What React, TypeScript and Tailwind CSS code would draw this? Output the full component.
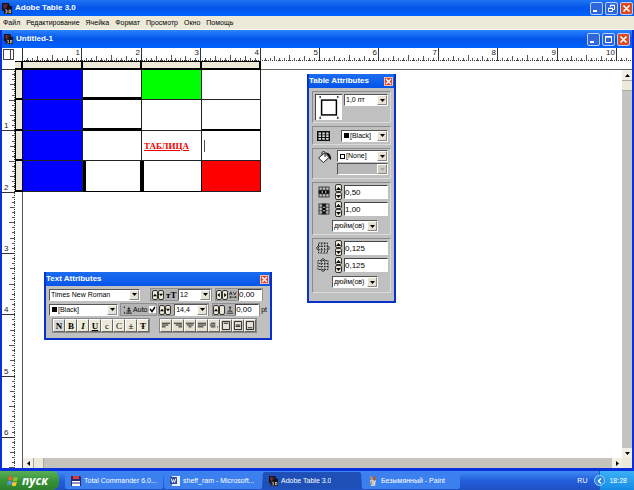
import { useState, type ReactNode } from "react";

const INCH_X = 59.4;
const INCH_Y = 61.3;

function Arrow({ dir }: { dir: "up" | "down" | "left" | "right" }) {
    const shapes = {
        up: "M0 4L2.5 1L5 4Z",
        down: "M0 1L2.5 4L5 1Z",
        left: "M4 0L1 2.5L4 5Z",
        right: "M1 0L4 2.5L1 5Z",
    };
    return (
        <svg viewBox="0 0 5 5" className="h-[5px] w-[5px] shrink-0">
            <path d={shapes[dir]} fill="#000" />
        </svg>
    );
}

function AppIcon({ small = false }: { small?: boolean }) {
    return (
        <svg viewBox="0 0 10 11" className={small ? "h-[10px] w-[9px] shrink-0" : "h-[11px] w-[10px] shrink-0"}>
            <path d="M0 0H7L8 3H10V11H2V8H0Z" fill="#16101c" />
            <path d="M1 2H6M1 4H5M3 1V6" stroke="#8c3a44" strokeWidth="0.8" />
            <path d="M3 7H5V8.5H4M5 8.5V10H3" stroke="#e8e0d0" strokeWidth="0.7" fill="none" />
            <rect x="7" y="7.2" width="1.8" height="2.6" stroke="#e8e0d0" strokeWidth="0.7" fill="none" />
        </svg>
    );
}

function WindowButtons({ restore = false }: { restore?: boolean }) {
    const base = "flex h-[13px] w-[13px] items-center justify-center rounded-[2px] border border-[#b9cdf5]";
    return (
        <div className="flex gap-[2px]">
            <button aria-label="Свернуть" className={`${base} bg-[#2f66dc]`}>
                <svg viewBox="0 0 11 11" className="h-[11px] w-[11px]"><path d="M2 8H6" stroke="#fff" strokeWidth="2" /></svg>
            </button>
            <button aria-label={restore ? "Восстановить" : "Развернуть"} className={`${base} bg-[#2f66dc]`}>
                {restore ? (
                    <svg viewBox="0 0 11 11" className="h-[11px] w-[11px]" fill="none" stroke="#fff">
                        <path d="M4.5 4V2.5H8.5V6.5H7M4 2.2H9M2.5 5.5H6.5V8.5H2.5ZM2 5.2H7" />
                    </svg>
                ) : (
                    <svg viewBox="0 0 11 11" className="h-[11px] w-[11px]" fill="none" stroke="#fff">
                        <path d="M2.5 2.5H8.5V8.5H2.5ZM2 3.2H9" />
                    </svg>
                )}
            </button>
            <button aria-label="Закрыть" className={`${base} bg-[#dc4a22]`}>
                <svg viewBox="0 0 11 11" className="h-[11px] w-[11px]"><path d="M2.5 2.5L8.5 8.5M8.5 2.5L2.5 8.5" stroke="#fff" strokeWidth="1.6" /></svg>
            </button>
        </div>
    );
}

function MenuBar() {
    const items = ["Файл", "Редактирование", "Ячейка", "Формат", "Просмотр", "Окно", "Помощь"];
    return (
        <nav className="flex h-[14px] shrink-0 items-center gap-[6px] border-b border-[#f8f7f0] bg-[#ece9d8] px-[3px] text-[7px] leading-[12px]">
            {items.map((item) => (
                <button key={item}>{item}</button>
            ))}
        </nav>
    );
}

function tickSize(i: number) {
    if (i % 6 === 0) return 5;
    if (i % 3 === 0) return 4;
    return 2;
}

function HorizontalRuler() {
    const ticks = Array.from({ length: 123 }, (_, i) => i);
    return (
        <svg className="h-[13px] min-w-0 flex-1 bg-white" shapeRendering="crispEdges">
            <path d="M0 12.5H2000" stroke="#333" strokeDasharray="1 1" />
            {ticks.map((i) => {
                const x = Math.round((i * INCH_X) / 12) + 0.5;
                return <path key={i} d={`M${x} ${i % 12 === 0 ? 0 : 12 - tickSize(i)}V13`} stroke={i % 12 === 0 ? "#333" : "#555"} />;
            })}
            {Array.from({ length: 10 }, (_, n) => n + 1).map((n) => (
                <text key={n} x={Math.round(n * INCH_X) - 1} y="7" textAnchor="end" fontSize="8" fill="#222">{n}</text>
            ))}
        </svg>
    );
}

function VerticalRuler() {
    const ticks = Array.from({ length: 79 }, (_, i) => i);
    return (
        <svg className="w-[13px] shrink-0 self-stretch bg-white" shapeRendering="crispEdges">
            <path d="M12.5 8V1200" stroke="#333" strokeDasharray="1 1" />
            {ticks.map((i) => {
                const y = Math.round((i * INCH_Y) / 12) + 8.5;
                return <path key={i} d={`M${i % 12 === 0 ? 0 : 12 - tickSize(i)} ${y}H13`} stroke={i % 12 === 0 ? "#333" : "#555"} />;
            })}
            {[1, 2, 3, 4, 5, 6].map((n) => (
                <text key={n} x="2" y={Math.round(n * INCH_Y) + 6} fontSize="8" fill="#222">{n}</text>
            ))}
        </svg>
    );
}

function DocumentTable() {
    const cell = "h-[31px] border-r border-b border-[#222] p-0";
    const head = "border-r-2 border-b-2 border-t border-black bg-[#ece9d8] p-0";
    const side = "border-b-2 border-r border-l border-black bg-[#ece9d8] p-0";
    return (
        <table className="w-[246px] shrink-0 table-fixed border-separate border-spacing-0">
            <colgroup>
                <col className="w-[8px]" />
                <col className="w-[60px]" />
                <col className="w-[59px]" />
                <col className="w-[60px]" />
                <col className="w-[59px]" />
            </colgroup>
            <thead>
                <tr className="h-[9px]">
                    <th className={head} />
                    <th className={head} />
                    <th className={head} />
                    <th className={head} />
                    <th className={head} />
                </tr>
            </thead>
            <tbody>
                <tr className="h-[30px]">
                    <th className={side} />
                    <td className="border-r border-b border-[#222] bg-[#0000ff] p-0" />
                    <td className="border-r border-b-3 border-r-[#222] border-b-black p-0" />
                    <td className="border-r border-b border-[#222] bg-[#00ff00] p-0" />
                    <td className="border-r border-b border-[#222] p-0" />
                </tr>
                <tr className="h-[31px]">
                    <th className={side} />
                    <td className={`${cell} bg-[#0000ff]`} />
                    <td className="border-r border-b-3 border-r-[#222] border-b-black p-0" />
                    <td className={cell} />
                    <td className="border-r border-b-2 border-r-[#222] border-b-black p-0" />
                </tr>
                <tr className="h-[30px]">
                    <th className={side} />
                    <td className="border-r border-b border-[#222] bg-[#0000ff] p-0" />
                    <td className="border-r border-b border-[#222] p-0" />
                    <td className="border-r border-b border-[#222] p-0 pl-[2px] text-left font-['Liberation_Serif',serif] text-[9px] leading-[12px] font-bold text-[#f00000] underline">
                        ТАБЛИЦА
                    </td>
                    <td className="border-r border-b border-[#222] p-0 pl-[2px]">
                        <div className="h-[12px] w-px bg-[#555]" />
                    </td>
                </tr>
                <tr className="h-[31px]">
                    <th className={side} />
                    <td className={`${cell} bg-[#0000ff]`} />
                    <td className="border-r-2 border-b border-l-3 border-black p-0" />
                    <td className="border-r border-b border-l-2 border-black p-0" />
                    <td className={`${cell} bg-[#ff0000]`} />
                </tr>
            </tbody>
        </table>
    );
}

function ScrollButton({ dir }: { dir: "up" | "down" | "left" | "right" }) {
    return (
        <button aria-label={dir} className="flex h-[10px] w-[10px] shrink-0 items-center justify-center bg-[#f2f0e6]">
            <Arrow dir={dir} />
        </button>
    );
}

function DocumentWindow() {
    return (
        <section className="flex min-h-0 flex-1 flex-col border-x-2 border-b-3 border-[#0831d9] bg-white">
            <header className="flex h-[18px] shrink-0 items-center gap-[3px] bg-linear-to-b from-[#2b83ff] via-[#0455e8] to-[#0062ff] px-[2px] text-white">
                <AppIcon small />
                <h2 className="flex-1 text-[8px] leading-[12px] font-bold">Untitled-1</h2>
                <WindowButtons />
            </header>
            <div className="flex h-[13px] shrink-0">
                <div className="flex w-[20px] shrink-0 p-[1px]">
                    <div className="h-[11px] w-[8px] border border-[#444]" />
                    <div className="h-[11px] w-[3px] border-y border-r border-[#444]" />
                </div>
                <HorizontalRuler />
            </div>
            <div className="flex min-h-0 flex-1">
                <VerticalRuler />
                <div className="flex min-w-0 flex-1 flex-col">
                    <div className="flex min-h-0 flex-1">
                        <div className="flex min-w-0 flex-1 flex-col">
                            <div className="flex">
                                <DocumentTable />
                                <div className="h-[9px] flex-1 border-b border-[#666]" />
                            </div>
                            <div className="ml-[7px] flex-1 border-l border-[#555]" />
                        </div>
                        <div className="flex w-[10px] flex-col">
                            <div className="h-[9px] shrink-0 border-b border-[#666]" />
                            <ScrollButton dir="up" />
                            <div className="h-[11px] border-y border-[#aaa] bg-[#ece9d8]" />
                            <div className="flex-1 bg-[#c4c4c0]" />
                            <ScrollButton dir="down" />
                        </div>
                    </div>
                    <div className="ml-[7px] flex h-[10px] border-l border-[#555] bg-[#c4c4bc]">
                        <ScrollButton dir="left" />
                        <div className="w-[11px] border-x border-[#aaa] bg-[#ece9d8]" />
                        <div className="flex-1" />
                        <ScrollButton dir="right" />
                        <div className="w-[10px] bg-[#ece9d8]" />
                    </div>
                </div>
            </div>
        </section>
    );
}

function Palette({ title, className, children }: { title: string; className: string; children: ReactNode }) {
    return (
        <section className={`absolute border-x-2 border-b-2 border-[#0831c9] bg-[#c0c0c0] ${className}`}>
            <header className="flex h-[14px] items-center bg-linear-to-b from-[#1c6cf0] to-[#0455e8] pr-[1px] text-white">
                <h3 className="flex-1 text-[8px] leading-[12px] font-bold">{title}</h3>
                <button aria-label="Закрыть" className="flex h-[9px] w-[9px] items-center justify-center border border-[#f3c0b0] bg-[#d9482a]">
                    <svg viewBox="0 0 7 7" className="h-[7px] w-[7px]"><path d="M1 1L6 6M6 1L1 6" stroke="#fff" strokeWidth="1.3" /></svg>
                </button>
            </header>
            {children}
        </section>
    );
}

function Combo({ label, value, className, swatch, disabled = false }: { label: string; value: string; className: string; swatch?: string; disabled?: boolean }) {
    return (
        <div className={`flex h-[12px] items-center border border-t-[#555] border-r-white border-b-white border-l-[#555] ${disabled ? "bg-[#b8b8b8]" : "bg-white"} ${className}`}>
            {swatch && <span className={`ml-[2px] h-[5px] w-[5px] shrink-0 border border-black ${swatch}`} />}
            <select aria-label={label} disabled={disabled} className="h-[10px] min-w-0 flex-1 appearance-none truncate bg-transparent pl-[1px] text-[7px] leading-[10px]">
                <option>{value}</option>
            </select>
            <span className={`flex h-[10px] w-[10px] shrink-0 items-center justify-center border border-t-white border-r-[#888] border-b-[#888] border-l-white ${disabled ? "bg-[#d0cec4]" : "bg-[#e6e3d4]"}`}>
                <svg viewBox="0 0 5 3" className="h-[3px] w-[5px]"><path d="M0 0H5L2.5 3Z" fill={disabled ? "#aaa" : "#000"} /></svg>
            </span>
        </div>
    );
}

function NumberBox({ label, initial, className }: { label: string; initial: string; className: string }) {
    const [value, setValue] = useState(initial);
    return (
        <input
            aria-label={label}
            value={value}
            onChange={(e) => setValue(e.target.value)}
            className={`border border-t-[#444] border-r-white border-b-white border-l-[#444] bg-white text-[8px] leading-[10px] ${className}`}
        />
    );
}

function VSpinner() {
    return (
        <div className="flex w-[7px] flex-col">
            <button aria-label="Больше" className="flex h-[8px] items-center justify-center rounded-[2px] border border-[#333] bg-[#ece9d8]">
                <svg viewBox="0 0 5 3" className="h-[3px] w-[5px] shrink-0"><path d="M0 3H5L2.5 0Z" /></svg>
            </button>
            <button aria-label="Меньше" className="flex h-[8px] items-center justify-center rounded-[2px] border border-[#333] bg-[#ece9d8]">
                <svg viewBox="0 0 5 3" className="h-[3px] w-[5px] shrink-0"><path d="M0 0H5L2.5 3Z" /></svg>
            </button>
        </div>
    );
}

function HSpinner({ kind }: { kind: "size" | "side" | "base" }) {
    const left = kind === "side" ? "M3.5 0.5L0.5 3L3.5 5.5Z" : "M0 4.5L2.5 1.5L5 4.5Z";
    const right = kind === "side" ? "M1.5 0.5L4.5 3L1.5 5.5Z" : "M0 1.5L2.5 4.5L5 1.5Z";
    return (
        <div className="flex">
            <button aria-label="Меньше" className="flex h-[10px] w-[6px] items-center justify-center rounded-[2px] border border-[#333] bg-[#ece9d8]">
                <svg viewBox="0 0 5 6" className="h-[6px] w-[4px] shrink-0"><path d={left} /></svg>
            </button>
            <button aria-label="Больше" className="flex h-[10px] w-[6px] items-center justify-center rounded-[2px] border border-[#333] bg-[#ece9d8]">
                {kind !== "base" && <svg viewBox="0 0 5 6" className="h-[6px] w-[4px] shrink-0"><path d={right} /></svg>}
            </button>
        </div>
    );
}

function RowsIcon({ vertical = false }: { vertical?: boolean }) {
    return (
        <svg viewBox="0 0 12 12" className="h-[12px] w-[12px]">
            <g transform={vertical ? "rotate(90 6 6)" : undefined} fill="none" stroke="#333" strokeWidth="0.9">
                <rect x="1" y="1" width="10" height="10" />
                <path d="M4.2 1V11M7.8 1V11" />
                <rect x="1" y="4.2" width="10" height="3.6" fill="#000" />
                <path d="M4.2 5V7M7.8 5V7" stroke="#fff" />
            </g>
        </svg>
    );
}

function MarginIcon({ vertical = false }: { vertical?: boolean }) {
    return (
        <svg viewBox="0 0 14 14" className="h-[14px] w-[14px]">
            <g transform={vertical ? "rotate(90 7 7)" : undefined} fill="none" stroke="#222" strokeWidth="0.9">
                <rect x="2.5" y="2" width="9" height="10" strokeDasharray="2 0.7" />
                <path d="M5.5 2V12M8.5 2V12M3 5.3H11M3 8.7H11" strokeDasharray="1.5 1" />
                <path d="M2 5L0.5 7L2 9M12 5L13.5 7L12 9" />
            </g>
        </svg>
    );
}

function TableAttributes() {
    const group = "border border-t-[#8a8a8a] border-r-[#e0d8d8] border-b-[#e0d8d8] border-l-[#8a8a8a]";
    return (
        <Palette title="Table Attributes" className="top-[74px] left-[307px] w-[89px]">
            <div className="flex flex-col gap-[3px] px-[3px] pt-[3px] pb-[8px]">
                <div className={`${group} flex h-[32px] justify-between p-[2px]`}>
                    <svg viewBox="0 0 27 27" className="h-[26px] w-[27px] border-t border-l border-[#444] bg-white">
                        <rect x="5.5" y="5.5" width="16" height="16" fill="none" stroke="#000" strokeWidth="1.6" />
                        <path d="M4 1V3.5M3 2H5M23 1V3.5M22 2H24M4 23V26M3 25H5M23 23V26M22 25H24" stroke="#333" />
                    </svg>
                    <Combo label="Толщина линии" value="1,0 пт" className="w-[44px]" />
                </div>
                <div className={`${group} flex h-[19px] items-center justify-between pr-[2px] pl-[4px]`}>
                    <svg viewBox="0 0 13 10" className="h-[10px] w-[13px]">
                        <rect width="13" height="10" fill="#111" />
                        <path d="M1.5 1.5H4V3.5H1.5ZM5.3 1.5H7.8V3.5H5.3ZM9.1 1.5H11.6V3.5H9.1ZM1.5 4.3H4V6H1.5ZM5.3 4.3H7.8V6H5.3ZM9.1 4.3H11.6V6H9.1ZM1.5 7H4V8.7H1.5ZM5.3 7H7.8V8.7H5.3ZM9.1 7H11.6V8.7H9.1Z" fill="#ddd" />
                    </svg>
                    <Combo label="Цвет линии" value="[Black]" swatch="bg-black" className="w-[47px]" />
                </div>
                <div className={`${group} flex h-[31px] justify-between pt-[1px] pr-[2px] pl-[4px]`}>
                    <svg viewBox="0 0 15 14" className="h-[14px] w-[15px]">
                        <path d="M1.5 8L7.5 3L12 7.5L6.5 12.5Z" fill="#fff" stroke="#222" />
                        <path d="M5 5V2.5Q6.5 -0.5 8 2.5V7" fill="none" stroke="#222" />
                        <path d="M8.5 2.5Q14.5 2.5 14 10Q12 9.5 12 7Z" fill="#111" />
                    </svg>
                    <div className="flex flex-col gap-[1px]">
                        <Combo label="Цвет заливки" value="[None]" swatch="bg-white" className="w-[51px]" />
                        <Combo label="Оттенок" value="" disabled className="w-[51px]" />
                    </div>
                </div>
                <div className={`${group} flex flex-col gap-[1px] pt-[1px] pr-[2px] pb-[2px] pl-[5px]`}>
                    <div className="flex items-center justify-between">
                        <RowsIcon />
                        <div className="flex items-center gap-[2px]">
                            <VSpinner />
                            <NumberBox label="Высота строки" initial="0,50" className="h-[14px] w-[44px]" />
                        </div>
                    </div>
                    <div className="flex items-center justify-between">
                        <RowsIcon vertical />
                        <div className="flex items-center gap-[2px]">
                            <VSpinner />
                            <NumberBox label="Ширина столбца" initial="1,00" className="h-[14px] w-[44px]" />
                        </div>
                    </div>
                    <Combo label="Единицы размеров" value="дюйм(ов)" className="mt-[2px] ml-[14px] w-[46px]" />
                </div>
                <div className={`${group} flex flex-col gap-[1px] pt-[1px] pr-[2px] pb-[4px] pl-[3px]`}>
                    <div className="flex items-center justify-between">
                        <MarginIcon />
                        <div className="flex items-center gap-[2px]">
                            <VSpinner />
                            <NumberBox label="Поля по горизонтали" initial="0,125" className="h-[14px] w-[44px]" />
                        </div>
                    </div>
                    <div className="flex items-center justify-between">
                        <MarginIcon vertical />
                        <div className="flex items-center gap-[2px]">
                            <VSpinner />
                            <NumberBox label="Поля по вертикали" initial="0,125" className="h-[14px] w-[44px]" />
                        </div>
                    </div>
                    <Combo label="Единицы полей" value="дюйм(ов)" className="mt-[2px] ml-[16px] w-[46px]" />
                </div>
            </div>
        </Palette>
    );
}

const styleButtons = [
    { text: "N", look: "font-bold bg-[#d8d8d8]" },
    { text: "B", look: "font-bold bg-[#ece9d8]" },
    { text: "I", look: "font-bold italic bg-[#ece9d8]" },
    { text: "U", look: "font-bold underline bg-[#ece9d8]" },
    { text: "c", look: "bg-[#ece9d8]" },
    { text: "C", look: "bg-[#ece9d8]" },
    { text: "±", look: "font-bold bg-[#ece9d8]" },
    { text: "Ŧ", look: "font-bold bg-[#ece9d8]" },
];

const alignButtons = [
    { name: "По левому краю", d: "M1 3.5H10M1 5.5H8M1 7.5H5" },
    { name: "По правому краю", d: "M1 3.5H10M3 5.5H10M6 7.5H10" },
    { name: "По центру", d: "M1 3.5H10M2 5.5H9M4 7.5H7" },
    { name: "По ширине", d: "M1 3.5H10M1 5.5H10M1 7.5H7" },
    { name: "По десятичной точке", d: "M2 3.5H7M1 5.5H7M2 7.5H7M9 7.5H10" },
    { name: "Сверху", d: "M1.5 1.5H9.5V10.5H1.5ZM3 3.5H8" },
    { name: "По середине", d: "M1.5 1.5H9.5V10.5H1.5ZM3 5.5H8M3 7H8" },
    { name: "Снизу", d: "M1.5 1.5H9.5V10.5H1.5ZM3 8.5H8" },
];

function TextAttributes() {
    const group = "flex h-[13px] items-center border border-[#8f8f8f] bg-[#b4b4b4]";
    return (
        <Palette title="Text Attributes" className="top-[272px] left-[44px] w-[228px]">
            <div className="flex flex-col gap-[2px] px-[3px] pt-[2px] pb-[5px] text-[7px] leading-[10px]">
                <div className="flex items-center">
                    <Combo label="Шрифт" value="Times New Roman" className="w-[91px]" />
                    <div className={`${group} ml-[10px] w-[62px] gap-[2px] pl-[1px]`}>
                        <HSpinner kind="size" />
                        <span className="w-[10px] font-['Liberation_Serif',serif] text-[9px] font-bold">тT</span>
                        <Combo label="Кегль" value="12" className="w-[34px]" />
                    </div>
                    <div className={`${group} ml-[3px] w-[48px] gap-[1px]`}>
                        <HSpinner kind="side" />
                        <svg viewBox="0 0 11 10" className="h-[10px] w-[10px]" fill="none" stroke="#111" strokeWidth="0.9">
                            <path d="M0.5 5L2.5 0.5L4.5 5M1 3.5H4M6 0.5L8 5L10 0.5M1 8H10M3 6.5L1 8L3 9.5M8 6.5L10 8L8 9.5" />
                        </svg>
                        <NumberBox label="Трекинг" initial="0,00" className="h-[12px] w-[24px]" />
                    </div>
                </div>
                <div className="flex items-center">
                    <Combo label="Цвет текста" value="[Black]" swatch="bg-black" className="w-[71px]" />
                    <label className={`${group} ml-[2px] w-[38px] gap-[1px] pl-[2px]`}>
                        <svg viewBox="0 0 10 10" className="h-[10px] w-[9px] shrink-0" fill="none" stroke="#111">
                            <path d="M1.5 1V3M1.5 7V9M3 8.5H10M4 6H9M6.5 2V8M5 3.5H8" />
                        </svg>
                        <span>Auto</span>
                        <span className="relative ml-auto flex h-[7px] w-[7px]">
                            <input type="checkbox" defaultChecked className="h-[7px] w-[7px] appearance-none bg-white" />
                            <svg viewBox="0 0 7 7" className="pointer-events-none absolute inset-0 h-[7px] w-[7px]"><path d="M1 3L3 5.5L6 1" fill="none" stroke="#000" strokeWidth="1.4" /></svg>
                        </span>
                    </label>
                    <div className={`${group} ml-[1px] w-[51px] justify-end gap-[3px]`}>
                        <HSpinner kind="size" />
                        <Combo label="Интерлиньяж" value="14,4" className="w-[34px]" />
                    </div>
                    <div className={`${group} ml-[3px] w-[48px] gap-[1px]`}>
                        <HSpinner kind="base" />
                        <svg viewBox="0 0 10 10" className="h-[10px] w-[10px]" fill="none" stroke="#111">
                            <path d="M1 9H9M2 6.5H8M5 1V6M3.5 2.5L5 1L6.5 2.5" />
                        </svg>
                        <NumberBox label="Смещение" initial="0,00" className="h-[12px] w-[24px]" />
                    </div>
                    <span className="ml-[1px]">pt</span>
                </div>
                <div className="flex">
                    <div className="ml-[3px] flex border border-[#888]">
                        {styleButtons.map((b) => (
                            <button key={b.text} className={`h-[13px] w-[12px] border border-t-white border-r-[#666] border-b-[#666] border-l-white font-['Liberation_Serif',serif] text-[9px] leading-[10px] ${b.look}`}>
                                {b.text}
                            </button>
                        ))}
                    </div>
                    <div className="ml-[9px] flex border border-[#888]">
                        {alignButtons.map((b) => (
                            <button key={b.name} aria-label={b.name} className="h-[13px] w-[12px] border border-t-white border-r-[#666] border-b-[#666] border-l-white bg-[#e4e1d2]">
                                <svg viewBox="0 0 11 12" className="h-[11px] w-[10px]" fill="none" stroke="#111"><path d={b.d} /></svg>
                            </button>
                        ))}
                    </div>
                </div>
            </div>
        </Palette>
    );
}

function Taskbar() {
    const task = "flex h-[17px] w-[98px] min-w-0 items-center gap-[3px] rounded-[2px] pl-[6px] text-left";
    return (
        <footer className="flex h-[19px] shrink-0 items-center bg-linear-to-b from-[#3f8cf3] via-[#245edb] to-[#1f50c4] text-[7px] leading-[12px] text-white">
            <button className="flex h-[19px] w-[59px] items-center gap-[3px] rounded-r-[7px] bg-linear-to-b from-[#5aae58] via-[#379437] to-[#2c7f2c] pl-[7px] font-['Open_Sans',sans-serif] text-[12px] leading-[16px] font-bold italic">
                <svg viewBox="0 0 12 12" className="h-[12px] w-[12px]">
                    <path d="M2 1.5Q4 0.5 5.8 1.7L5 5.5Q3 4.5 1 5.5Z" fill="#f0602c" />
                    <path d="M6.6 2Q8.5 3 11 2L10 5.8Q8 6.8 5.8 5.8Z" fill="#86c440" />
                    <path d="M0.9 6.3Q3 5.3 4.8 6.4L4 10Q2 9 0 10Z" fill="#5a92f0" />
                    <path d="M5.6 6.7Q8 7.7 9.8 6.7L9 10.4Q7 11.4 4.8 10.4Z" fill="#fbc832" />
                </svg>
                пуск
            </button>
            <div className="ml-[6px] flex min-w-0 flex-1 gap-[1px]">
                <button className={`${task} bg-[#3c80ef]`}>
                    <svg viewBox="0 0 10 10" className="h-[10px] w-[10px] shrink-0">
                        <path d="M0 0H9L10 1V10H0Z" fill="#28286c" />
                        <path d="M2 0H8V3H2Z" fill="#e03838" />
                        <path d="M1 5H9V6.5H1ZM1 7.5H9V10H1Z" fill="#fff" />
                    </svg>
                    <span className="truncate">Total Commander 6.0...</span>
                </button>
                <button className={`${task} bg-[#3c80ef]`}>
                    <svg viewBox="0 0 10 10" className="h-[10px] w-[10px] shrink-0">
                        <path d="M2 0H10V10H2Z" fill="#e9effc" />
                        <path d="M0 1H7V8H0Z" fill="#284a9e" />
                        <path d="M1.2 2.5L2.4 6.5L3.5 3.5L4.6 6.5L5.8 2.5" fill="none" stroke="#fff" strokeWidth="0.9" />
                    </svg>
                    <span className="truncate">sheff_ram - Microsoft...</span>
                </button>
                <button className={`${task} bg-[#1e50b8]`}>
                    <AppIcon small />
                    <span className="truncate">Adobe Table 3.0</span>
                </button>
                <button className={`${task} bg-[#3c80ef]`}>
                    <svg viewBox="0 0 10 10" className="h-[10px] w-[10px] shrink-0">
                        <path d="M2 4H8L7 10H3Z" fill="#c9d0dc" />
                        <path d="M3 4L2 0L4 1L5 4Z" fill="#d8a038" />
                        <path d="M5 4L6 0L8 1L7 5Z" fill="#c05030" />
                        <path d="M3 5L4 9" stroke="#c88a30" />
                    </svg>
                    <span className="truncate">Безымянный - Paint</span>
                </button>
            </div>
            <span className="mr-[12px]">RU</span>
            <div className="flex h-[19px] items-center gap-[4px] border-l border-[#1a62b8] bg-linear-to-b from-[#3ab0f6] to-[#128ce4] pr-[7px]">
                <button aria-label="Показать значки" className="-ml-[6px] flex h-[11px] w-[11px] items-center justify-center rounded-full border border-[#9cd4fa] bg-[#2a86e6]">
                    <svg viewBox="0 0 6 6" className="h-[6px] w-[6px]"><path d="M4 0.5L1.5 3L4 5.5" fill="none" stroke="#fff" strokeWidth="1.5" /></svg>
                </button>
                <span>18:28</span>
            </div>
        </footer>
    );
}

export default function App() {
    return (
        <div className="relative flex h-screen flex-col overflow-hidden bg-white font-['Liberation_Sans',Arial,sans-serif] text-black">
            <header className="flex h-[16px] shrink-0 items-center gap-[3px] bg-linear-to-b from-[#1f74f5] via-[#0455e8] to-[#0062ff] pr-[1px] pl-[2px] text-white">
                <AppIcon />
                <h1 className="flex-1 text-[8px] leading-[12px] font-bold">Adobe Table 3.0</h1>
                <WindowButtons restore />
            </header>
            <MenuBar />
            <DocumentWindow />
            <TableAttributes />
            <TextAttributes />
            <Taskbar />
        </div>
    );
}
